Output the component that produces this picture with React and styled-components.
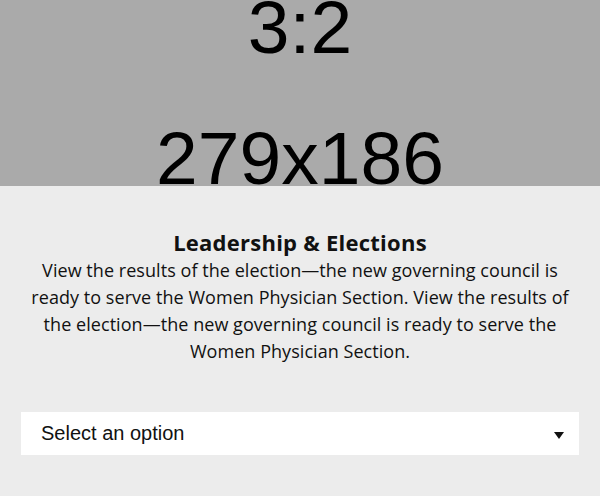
import React from "react";
import styled, { createGlobalStyle } from "styled-components";

const Global = createGlobalStyle`
  html, body { margin: 0; padding: 0; background: #ececec; }
  body { width: 600px; height: 496px; overflow: hidden; }
  * { box-sizing: border-box; }
`;

const Page = styled.div`
  width: 600px;
  height: 496px;
  display: flex;
  flex-direction: column;
  background: #ececec;
`;

const Hero = styled.div`
  height: 186px;
  flex: none;
  overflow: hidden;
  background: #aaaaaa;
  display: flex;
  flex-direction: column;
  align-items: center;
  font-family: "Liberation Sans", Arial, sans-serif;
  font-size: 75px;
  line-height: 60px;
  color: #000;
`;

const HeroLine = styled.div`
  margin-top: ${(p) => p.$offset}px;
  white-space: nowrap;
`;

const Content = styled.section`
  padding: 43px 25px 0;
  display: flex;
  flex-direction: column;
  align-items: center;
  text-align: center;
  color: #111;
  font-family: "Open Sans", Lato, sans-serif;
`;

const Title = styled.h2`
  margin: 0 0 2px;
  font-size: 22px;
  letter-spacing: 0.25px;
  line-height: 26px;
  font-weight: 700;
`;

const Body = styled.p`
  margin: 0;
  font-size: 18px;
  letter-spacing: 0.05px;
  line-height: 27px;
  font-weight: 400;
`;

const SelectWrap = styled.div`
  margin: 47px 21px 0;
  height: 43px;
  background: #fff;
  display: flex;
  align-items: center;
  justify-content: space-between;
  padding: 0 15px 0 20px;
  font-family: "Liberation Sans", Arial, sans-serif;
  font-size: 20px;
  color: #111;
`;

const Arrow = styled.svg`
  width: 10px;
  height: 7px;
  margin-top: 4px;
`;

export default function App() {
  return (
    <Page>
      <Global />
      <Hero>
        <HeroLine $offset={-3}>3:2</HeroLine>
        <HeroLine $offset={71}>279x186</HeroLine>
      </Hero>
      <Content>
        <Title>Leadership &amp; Elections</Title>
        <Body>
          View the results of the election—the new governing council is ready
          to serve the Women Physician Section. View the results of the
          election—the new governing council is ready to serve the Women
          Physician Section.
        </Body>
      </Content>
      <SelectWrap>
        <span>Select an option</span>
        <Arrow viewBox="0 0 10 7">
          <path d="M0 0 H10 L5 7 Z" fill="#111" />
        </Arrow>
      </SelectWrap>
    </Page>
  );
}
